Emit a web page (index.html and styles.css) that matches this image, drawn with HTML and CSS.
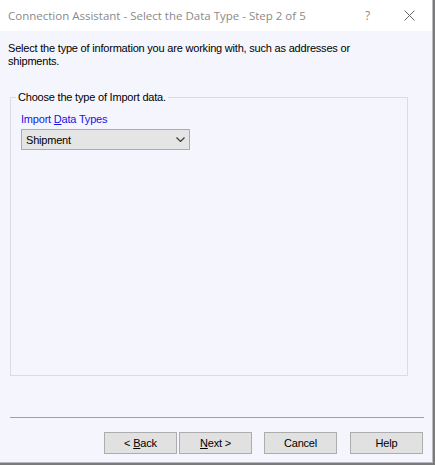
FILE: index.html
```html
<!DOCTYPE html>
<html>
<head>
<meta charset="utf-8">
<link rel="stylesheet" href="styles.css">
</head>
<body>
<div class="window">
  <div class="titlebar">
    <span class="title">Connection Assistant - Select the Data Type - Step 2 of 5</span>
    <span class="help-q">?</span>
    <span class="close">
      <svg width="11" height="11" viewBox="0 0 11 11"><path d="M0.5 0.5 L10.5 10.5 M10.5 0.5 L0.5 10.5" stroke="#666" stroke-width="1" fill="none"/></svg>
    </span>
  </div>
  <div class="content">
    <p class="desc">Select the type of information you are working with, such as addresses or shipments.</p>
    <fieldset class="group">
      <legend>Choose the type of Import data.</legend>
      <div class="group-body">
        <div class="label">Import <u>D</u>ata Types</div>
        <div class="combo">
          <span>Shipment</span>
          <svg width="9" height="5" viewBox="0 0 9 5"><path d="M0.5 0.5 L4.5 4.5 L8.5 0.5" stroke="#333" stroke-width="1.1" fill="none"/></svg>
        </div>
      </div>
    </fieldset>
    <div class="sep"></div>
    <div class="buttons">
      <button class="btn">&lt; <u>B</u>ack</button>
      <button class="btn next"><u>N</u>ext &gt;</button>
      <button class="btn cancel">Cancel</button>
      <button class="btn help">Help</button>
    </div>
  </div>
</div>
</body>
</html>
```

FILE: styles.css
```css
html, body {
  margin: 0;
  padding: 0;
}
body {
  background: #7a7a7a;
  width: 435px;
  height: 465px;
  overflow: hidden;
  font-family: "Liberation Sans", Arial, sans-serif;
}
.window {
  width: 433px;
  height: 463px;
  background: #f5f6fd;
  box-sizing: border-box;
  border-right: 1px solid #b9b9c0;
  border-bottom: 1px solid #b9b9c0;
  display: flex;
  flex-direction: column;
}
.titlebar {
  height: 31px;
  background: #ffffff;
  display: flex;
  align-items: center;
  padding-left: 8px;
  flex-shrink: 0;
}
.title {
  font-family: "Open Sans", "Noto Sans", sans-serif;
  font-size: 11.5px;
  color: #8a8a8a;
  flex: 1;
  white-space: nowrap;
}
.help-q {
  font-family: "Open Sans", sans-serif;
  font-size: 12px;
  color: #8a8a8a;
  width: 12px;
  margin-right: 27px;
}
.close {
  width: 11px;
  height: 11px;
  margin-right: 17px;
  display: flex;
}
.content {
  padding: 11px 9px 0 8px;
  font-size: 11px;
  letter-spacing: -0.2px;
  color: #000;
  display: flex;
  flex-direction: column;
}
.desc {
  margin: 0;
  line-height: 13px;
  width: 360px;
}
.group {
  margin: 23px 0 0 2px;
  width: 398px;
  height: 285px;
  box-sizing: border-box;
  border: 1px solid #dcdcdc;
  padding: 0;
}
.group legend {
  padding: 0 2px;
  margin-left: 5px;
  line-height: 13px;
}
.group-body {
  padding: 9px 0 0 10px;
}
.label {
  color: #1414e6;
  line-height: 13px;
}
.combo {
  margin-top: 3px;
  width: 169px;
  height: 21px;
  box-sizing: border-box;
  background: #e5e5e5;
  border: 1px solid #acacac;
  display: flex;
  align-items: center;
  justify-content: space-between;
  padding: 0 4px 0 4px;
}
.sep {
  margin-top: 41px;
  margin-left: 2px;
  height: 1px;
  background: #a0a0a0;
  width: 414px;
}
.buttons {
  display: flex;
  justify-content: flex-end;
  margin-top: 14px;
}
.btn {
  width: 73px;
  height: 22px;
  box-sizing: border-box;
  background: #e1e1e1;
  border: 1px solid #adadad;
  font-family: "Liberation Sans", Arial, sans-serif;
  font-size: 11px;
  letter-spacing: -0.2px;
  color: #000;
  padding: 0;
  margin: 0;
}
.next { margin-left: 2px; }
.cancel { margin-left: 12px; }
.help { margin-left: 13px; }
```
